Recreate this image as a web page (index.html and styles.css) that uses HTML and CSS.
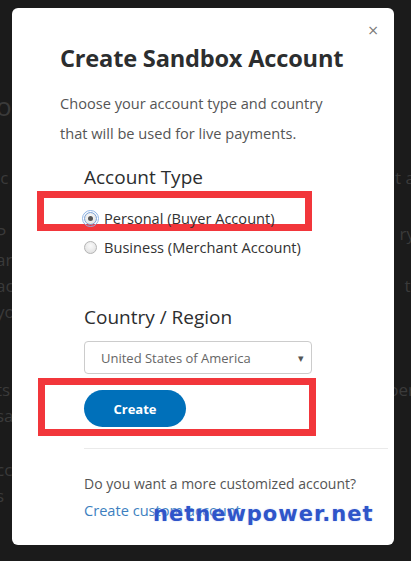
FILE: index.html
```html
<!DOCTYPE html>
<html lang="en">
<head>
  <meta charset="UTF-8">
  <title>Create Sandbox Account</title>
  <link rel="stylesheet" href="styles.css">
</head>
<body>
  <!-- page behind the dimmed overlay -->
  <div class="backdrop">
    <div class="bg-line bg-big"><span>oo</span><span></span></div>
    <div class="bg-line" style="margin-top:52px"><span>ic</span><span>t a</span></div>
    <div class="bg-line" style="margin-top:30px"><span>P</span><span>ry</span></div>
    <div class="bg-line"><span>ar</span><span></span></div>
    <div class="bg-line"><span>ac</span><span>t,</span></div>
    <div class="bg-line"><span>yo</span><span></span></div>
    <div class="bg-line" style="margin-top:52px"><span>ts</span><span>oer</span></div>
    <div class="bg-line"><span>sa</span><span></span></div>
    <div class="bg-line" style="margin-top:28px"><span>cc</span><span></span></div>
    <div class="bg-line"><span>s</span><span></span></div>
  </div>

  <div class="modal">
    <button class="close" type="button">&times;</button>
    <h1>Create Sandbox Account</h1>
    <p class="intro">Choose your account type and country that will be used for live payments.</p>

    <form class="account-form">
      <h2>Account Type</h2>
      <div class="mark mark-radio">
        <label class="radio"><input type="radio" name="type" class="focused" checked> Personal (Buyer Account)</label>
      </div>
      <label class="radio"><input type="radio" name="type"> Business (Merchant Account)</label>

      <h2 class="country-title">Country / Region</h2>
      <div class="select">
        <span>United States of America</span>
        <span class="caret">&#9662;</span>
      </div>

      <div class="mark mark-button">
        <button type="submit" class="create">Create</button>
      </div>
    </form>

    <hr>

    <div class="custom">
      <p>Do you want a more customized account?</p>
      <a href="#">Create custom account</a>
    </div>

    <div class="watermark">netnewpower.net</div>
  </div>
</body>
</html>
```

FILE: styles.css
```css
body {
  margin: 0;
  width: 411px;
  height: 561px;
  overflow: hidden;
  background-color: #1b1b1b;
  font-family: 'Open Sans', 'Noto Sans', sans-serif;
  position: relative;
}

.backdrop {
  padding-top: 88px;
  color: #3a3a3a;
  font-size: 17px;
}

.bg-line {
  display: flex;
  justify-content: space-between;
  height: 26px;
  margin-left: -4px;
  margin-right: -4px;
}

.bg-big {
  font-size: 26px;
}

.modal {
  position: absolute;
  left: 12px;
  top: 8px;
  width: 382px;
  height: 537px;
  background: #fff;
  border-radius: 6px;
  box-sizing: border-box;
  padding: 33px 0 0 48px;
}

.close {
  position: absolute;
  top: 14px;
  right: 15px;
  border: none;
  background: none;
  color: #777;
  font-size: 14px;
  padding: 0;
  font-family: 'DejaVu Sans', sans-serif;
}

h1 {
  margin: 0;
  font-size: 23.6px;
  line-height: 34px;
  font-weight: 700;
  color: #2c2e2f;
  letter-spacing: -0.2px;
}

.intro {
  margin: 13px 0 0;
  width: 280px;
  font-size: 14.6px;
  line-height: 30px;
  color: #555;
}

.account-form {
  padding-left: 24px;
}

h2 {
  margin: 15px 0 0;
  font-size: 19px;
  line-height: 28px;
  font-weight: 400;
  color: #2c2e2f;
}

.mark {
  border: 7px solid #f2363b;
  margin-left: -47px;
  box-sizing: border-box;
}

.mark-radio {
  width: 275px;
  height: 40px;
  padding: 8px 0 0 40px;
}

.radio {
  display: flex;
  align-items: center;
  gap: 7px;
  font-size: 14.6px;
  color: #333;
  height: 24px;
}

.radio input {
  appearance: none;
  margin: 0;
  width: 13px;
  height: 13px;
  border-radius: 50%;
  border: 1px solid #b4b4b4;
  background: radial-gradient(circle at 50% 35%, #fafafa, #dcdcdc);
  box-sizing: border-box;
  position: relative;
}

.radio input:checked::after {
  content: "";
  position: absolute;
  left: 3px;
  top: 3px;
  width: 5px;
  height: 5px;
  border-radius: 50%;
  background: #555;
}

.radio input.focused {
  outline: 1px solid #8fb4e6;
  outline-offset: 1px;
  border-color: #7aa2d8;
}

.mark-radio + .radio {
  margin-top: 4px;
}

.country-title {
  margin-top: 44px;
}

.select {
  margin-top: 10px;
  width: 228px;
  height: 33px;
  border: 1px solid #ccc;
  border-radius: 4px;
  box-sizing: border-box;
  display: flex;
  align-items: center;
  justify-content: space-between;
  padding: 0 7px 0 16px;
  font-size: 13px;
  color: #666;
}

.caret {
  font-size: 11px;
  color: #555;
}

.mark-button {
  margin-top: 4px;
  margin-left: -46px;
  width: 278px;
  height: 58px;
  padding: 5px 0 0 39px;
}

.create {
  width: 102px;
  height: 37px;
  border: none;
  border-radius: 19px;
  background-color: #0070ba;
  color: #fff;
  font-family: 'Open Sans', sans-serif;
  font-weight: 700;
  font-size: 13px;
}

hr {
  margin: 12px 6px 0 24px;
  border: none;
  border-top: 1px solid #eaeaea;
}

.custom {
  padding: 22px 0 0 24px;
}

.custom p {
  margin: 0;
  font-size: 14px;
  line-height: 26px;
  color: #555;
}

.custom a {
  font-size: 14.6px;
  line-height: 26px;
  color: #3d7fc0;
  text-decoration: none;
}

.watermark {
  position: absolute;
  left: 141px;
  top: 494px;
  font-family: 'DejaVu Sans', sans-serif;
  font-weight: 700;
  font-size: 21px;
  letter-spacing: 1px;
  color: #2f55c9;
  text-shadow: 0 0 2px #c8d4f5;
}
```
